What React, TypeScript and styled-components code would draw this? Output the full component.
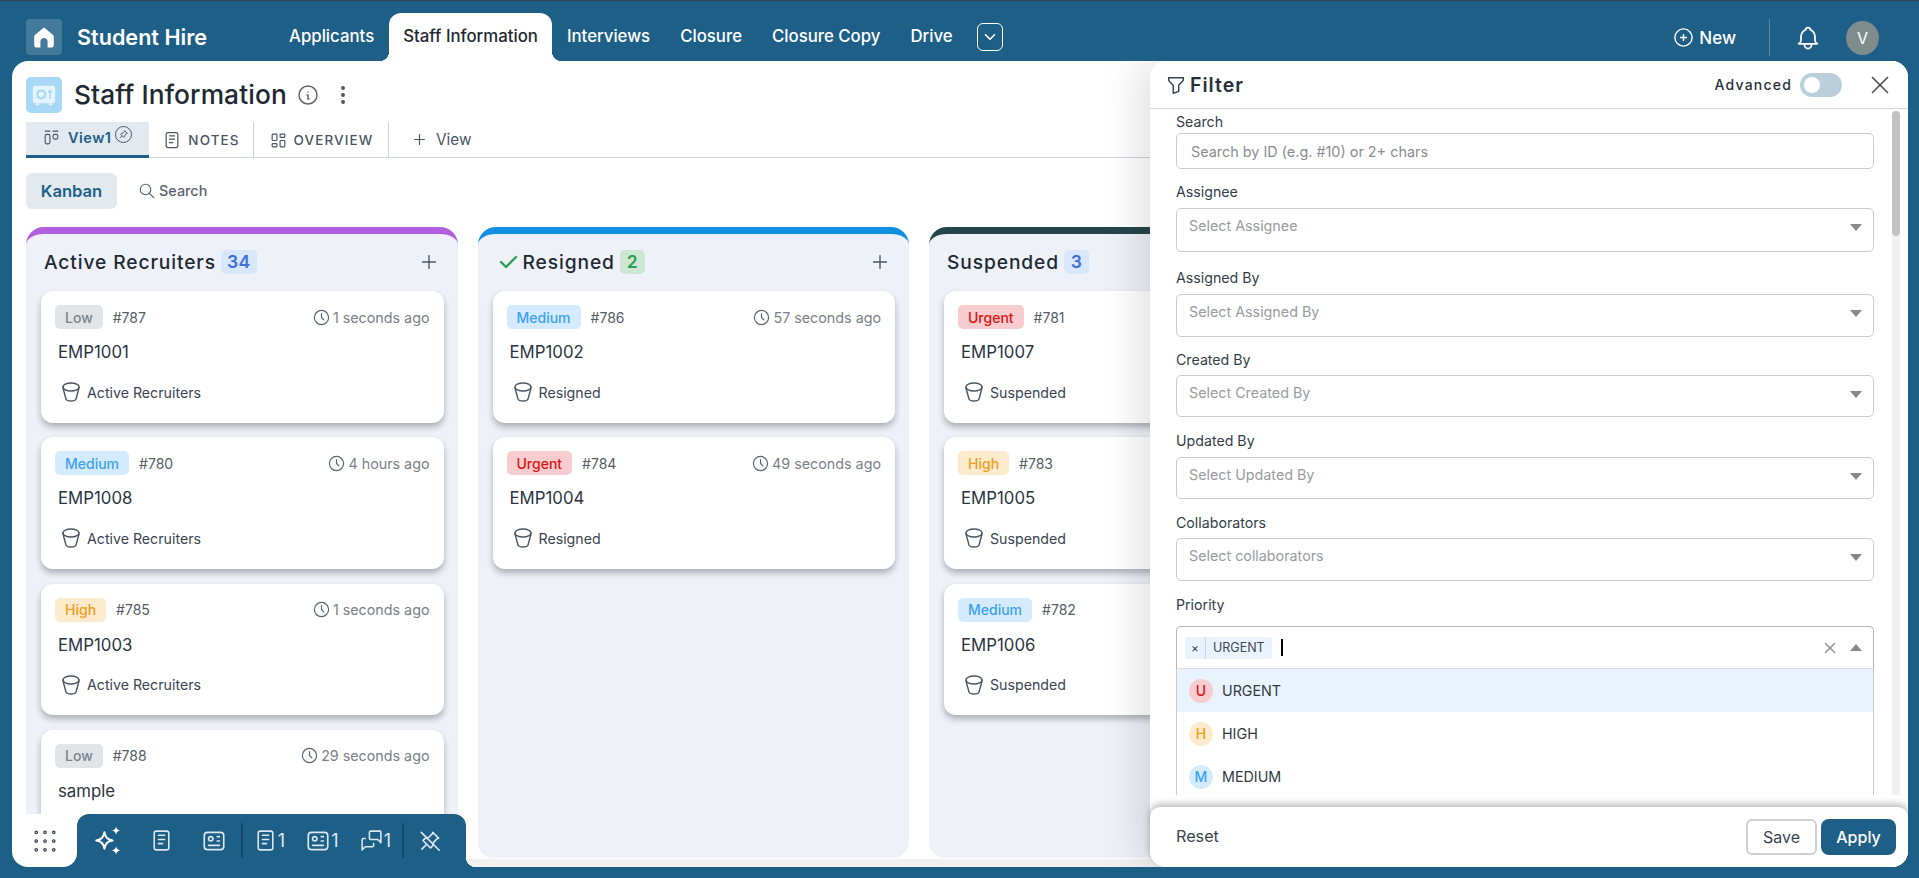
import React from "react";
import styled, { createGlobalStyle } from "styled-components";
import {
  TbBell, TbBucket, TbCheck, TbChevronDown, TbCirclePlus, TbClock, TbDotsVertical, TbFilter, TbGridDots, TbId,
  TbInfoCircle, TbLayoutDashboard, TbLayoutKanban, TbMessages, TbNotes, TbPlus, TbSearch, TbX, TbPin,
} from "react-icons/tb";

const BLUE = "#1d5f87";
const FONT = `Inter, "Noto Sans", sans-serif`;

const Global = createGlobalStyle`
  html, body { margin: 0; height: 100%; overflow: hidden; }
  body { font-family: ${FONT}; background: ${BLUE}; }
  #root { height: 100%; }
  * { box-sizing: border-box; }
`;

const Page = styled.div`
  height: 100vh; display: flex; flex-direction: column; background: ${BLUE};
  border-top: 1px solid #36444d;
`;
const TopBar = styled.header`
  height: 60px; flex: none; display: flex; align-items: flex-end; padding-left: 26px; padding-right: 40px; color: #fff;
`;
const Brand = styled.div`
  display: flex; align-items: center; gap: 15px; height: 36px; margin-bottom: 6px; margin-right: 33px; width: 215px;
`;
const HomeBox = styled.div`
  width: 36px; height: 36px; border-radius: 4px; background: rgba(255,255,255,.17); display: flex; align-items: center; justify-content: center; flex: none;
`;
const BrandName = styled.div`font-size: 21.6px; font-weight: 600; white-space: nowrap;`;
const NavTab = styled.div<{ $active?: boolean }>`
  position: relative; height: 48px; padding: 0 ${(p) => (p.$active ? "14px" : "15px")}; display: flex; align-items: center;
  font-size: 16.8px; font-weight: 500; white-space: nowrap; padding-bottom: 2px;
  color: ${(p) => (p.$active ? "#1f2933" : "#fff")};
  background: ${(p) => (p.$active ? "#fff" : "transparent")};
  border-radius: 12px 12px 0 0;
  ${(p) => p.$active && `
    &::before, &::after { content: ""; position: absolute; bottom: 0; width: 10px; height: 10px; }
    &::before { left: -10px; background: radial-gradient(circle at 0 0, transparent 10px, #fff 10.5px); }
    &::after { right: -10px; background: radial-gradient(circle at 100% 0, transparent 10px, #fff 10.5px); }
  `}
`;
const MoreButton = styled.div`
  width: 26px; height: 28px; border: 1px solid #fff; border-radius: 6px; display: flex; align-items: center; justify-content: center;
  margin: 0 0 10px 9px;
`;
const TopRight = styled.div`margin-left: auto; display: flex; align-items: center; height: 37px; margin-bottom: 5px;`;
const NewButton = styled.div`display: flex; align-items: center; gap: 4px; font-size: 17px; font-weight: 500;`;
const Divider = styled.div`width: 1px; height: 37px; background: rgba(255,255,255,.25); margin: 0 24px 0 33px;`;
const Avatar = styled.div`
  width: 33px; height: 34px; border-radius: 50%; background: #7f8c8c; margin-left: 24px; display: flex; align-items: center; justify-content: center; font-size: 16px; font-weight: 400;
`;

const MainPanel = styled.main`
  position: relative; flex: 1; min-height: 0; margin: 0 11px 11px 12px; background: #fff; border-radius: 16px; overflow: hidden;
  display: flex; flex-direction: column; padding-top: 16px;
`;
const TitleRow = styled.div`display: flex; align-items: center; height: 36px; padding-left: 14px; flex: none;`;
const SafeBox = styled.div`
  width: 36px; height: 36px; border-radius: 5px; background: #a7d9f6; display: flex; align-items: center; justify-content: center; margin-right: 12px;
`;
const PageTitle = styled.h1`margin: 0 0 1px; font-size: 26.3px; font-weight: 500; color: #1f2933; white-space: nowrap; letter-spacing: .1px;`;
const TitleIcon = styled.span<{ $gap: number }>`display: flex; margin-left: ${(p) => p.$gap}px; color: #666;`;
const ViewTabs = styled.div`
  display: flex; height: 36px; margin: 9px 0 0 14px; border-bottom: 1px solid #cfd2d6; flex: none;
`;
const ViewTab = styled.div<{ $w: number }>`
  width: ${(p) => p.$w}px; height: 36px; display: flex; align-items: center; justify-content: center; gap: 6px; color: #4b5563;
  font-size: 13.5px; font-weight: 500; letter-spacing: 1.1px; white-space: nowrap;
  border-right: 1px solid #cfd2d6;
`;
const ActiveViewTab = styled.div`
  width: 123px; height: 36px; display: flex; align-items: center; gap: 7px; padding: 0 0 3px 16px; white-space: nowrap;
  background: #e2eaf0; color: ${BLUE}; border-bottom: 3px solid ${BLUE}; font-weight: 600; letter-spacing: .5px; font-size: 14.5px;
`;
const PinCircle = styled.span`
  width: 17px; height: 17px; border: 1px solid #4b5563; border-radius: 50%; display: inline-flex; align-items: center; justify-content: center; color: #4b5563; margin-left: -4px; margin-top: -6px;
`;
const AddView = styled.div`
  display: flex; align-items: center; gap: 8px; margin-left: 22px; color: #4b5563; font-size: 15.3px; font-weight: 400;
`;
const ToolRow = styled.div`display: flex; align-items: center; height: 36px; margin: 15px 0 0 14px; flex: none;`;
const KanbanChip = styled.div`
  width: 91px; height: 36px; border-radius: 6px; background: #e2eaf0; color: ${BLUE}; font-size: 16.6px; font-weight: 600; display: flex; align-items: center; justify-content: center;
`;
const SearchLink = styled.div`
  display: flex; align-items: center; gap: 3px; margin-left: 21px; font-size: 14.4px; font-weight: 500; color: #5b6470; padding-bottom: 1px;
`;
const Board = styled.div`flex: 1; min-height: 0; display: flex; gap: 20px; padding-left: 14px; margin-top: 18px; overflow: hidden;`;
const Column = styled.section<{ $accent: string }>`
  width: 431.5px; flex: none; height: 100%; background: #eef1f7; border-top: 7px solid ${(p) => p.$accent}; border-radius: 18px 18px 16px 16px; overflow: hidden;
  padding: 0 14px 0 15px;
`;
const ColumnHead = styled.div`display: flex; align-items: center; height: 57px; padding: 0 4px 2px 0; color: #4b5563;`;
const CheckMark = styled(TbCheck)`margin-left: 3px; flex: none;`;
const ColumnName = styled.div`
  font-size: 19.2px; font-weight: 500; color: #1f2933; letter-spacing: .9px; white-space: nowrap; margin-left: 3px;
`;
const Count = styled.span<{ $green?: boolean }>`
  margin-left: 5px; height: 24px; min-width: 25px; padding: 0 6px; border-radius: 5px; display: flex; align-items: center; justify-content: center;
  font-size: 17.5px; font-weight: 600; letter-spacing: .5px;
  background: ${(p) => (p.$green ? "#cde7d2" : "#d9e7fc")}; color: ${(p) => (p.$green ? "#2f9e57" : "#3f6fd8")};
`;
const AddCard = styled.span`margin-left: auto; display: flex;`;
const CardEl = styled.article`
  height: 131.8px; margin-bottom: 14.5px; background: #fff; border-radius: 12px; padding: 14px 14px 0;
  box-shadow: 0 4px 6px rgba(30,40,50,.32);
`;
const CardTop = styled.div`display: flex; align-items: center; height: 24px;`;
const tones = {
  Low: ["#e2e4e8", "#7a828c"],
  Medium: ["#d3ebfd", "#3da1ee"],
  High: ["#fbeacb", "#ef9d1a"],
  Urgent: ["#f7ccce", "#dc1414"],
} as const;
const Tag = styled.span<{ $tone: keyof typeof tones }>`
  height: 24px; padding: 0 10px; border-radius: 5px; display: flex; align-items: center; font-size: 14px; font-weight: 500;
  background: ${(p) => tones[p.$tone][0]}; color: ${(p) => tones[p.$tone][1]};
`;
const CardId = styled.span`margin-left: 10px; font-size: 14px; color: #555c66;`;
const CardTime = styled.span`margin-left: auto; display: flex; align-items: center; gap: 2px; font-size: 14.3px; color: #7a8088; white-space: nowrap;`;
const CardName = styled.div`margin: 13px 0 0 3px; font-size: 16.8px; line-height: 20px; color: #2a3442;`;
const CardStatus = styled.div`display: flex; align-items: center; gap: 4px; height: 24px; margin: 18px 0 0 4px; font-size: 14.2px; color: #3a4452;`;
const ScrollStrip = styled.div`height: 8px; margin-top: 1px; background: #f1f1f1; flex: none;`;

const Dock = styled.div`
  position: absolute; left: 0; bottom: 0; height: 53px; display: flex; background: linear-gradient(to bottom, #fff 50%, ${BLUE} 50%);
`;
const DockHome = styled.div`
  width: 65px; height: 53px; background: #fff; border-radius: 0 0 14px 14px; display: flex; align-items: center; justify-content: center; color: #3c4654;
`;
const DockBar = styled.div`
  position: relative; width: 389px; background: ${BLUE}; border-radius: 12px 12px 0 0; display: flex; align-items: center; padding-left: 4.5px; color: #dce8ef;
  &::after { content: ""; position: absolute; right: -10px; bottom: 0; width: 10px; height: 10px; background: radial-gradient(circle at 100% 0, transparent 10px, ${BLUE} 10.5px); }
`;
const DockItem = styled.div`
  width: 53px; height: 53px; display: flex; align-items: center; justify-content: center; gap: 0; font-size: 18px; font-weight: 400; flex: none;
`;
const DockRule = styled.div`width: 2px; height: 35px; background: #164a6a; flex: none;`;

const Filter = styled.aside`
  position: absolute; top: 0; right: 0; bottom: 0; width: 758px; background: #fff; border-radius: 16px 0 0 16px;
  box-shadow: -10px 0 40px rgba(0,0,0,.13); display: flex; flex-direction: column;
`;
const FilterHead = styled.div`
  height: 48px; flex: none; border-bottom: 1px solid #d5d7da; display: flex; align-items: center; padding: 0 13px 0 15px;
`;
const FilterName = styled.div`margin-left: 3px; font-size: 19.5px; font-weight: 600; color: #27303a; letter-spacing: 1px;`;
const AdvLabel = styled.div`margin-left: auto; font-size: 14px; font-weight: 500; color: #27303a; letter-spacing: 1.2px;`;
const Toggle = styled.div`
  width: 42px; height: 24px; margin: 0 23px 0 8px; border-radius: 12px; background: #b9cfdc; display: flex; align-items: center; padding-left: 4px;
  &::before { content: ""; width: 16px; height: 16px; border-radius: 50%; background: #fff; }
`;
const FilterBody = styled.div`height: 686px; flex: none; display: flex; overflow: hidden;`;
const FormCol = styled.div`width: 742px; padding: 4px 18px 0 26px; flex: none;`;
const ScrollTrack = styled.div`width: 8px; margin-top: 2px; background: #f1f1f1; flex: none; border-radius: 4px 4px 0 0;`;
const ScrollThumb = styled.div`height: 125px; background: #c1c1c1; border-radius: 4px;`;
const Label = styled.div<{ $top?: number }>`
  font-size: 14.2px; line-height: 18px; color: #333d4a; margin-top: ${(p) => p.$top ?? 0}px;
`;
const SearchInput = styled.div`
  height: 36px; margin-top: 2px; border: 1px solid #c9cbce; border-radius: 5px; display: flex; align-items: center; padding-left: 14px; font-size: 14.4px; color: #8a8d92;
`;
const SelectBox = styled.div<{ $h: number; $top: number }>`
  height: ${(p) => p.$h}px; margin-top: ${(p) => p.$top}px; border: 1px solid #c9cbce; border-radius: 5px; display: flex; justify-content: space-between;
  padding: 7px 11px 0 12px; font-size: 14.3px; line-height: 20px; color: #999c9f;
`;
const Caret = styled.span<{ $up?: boolean }>`
  width: 0; height: 0; border-left: 6.5px solid transparent; border-right: 6.5px solid transparent; margin-top: ${(p) => (p.$up ? 0 : 8)}px;
  ${(p) => (p.$up ? "border-bottom: 7px solid #888;" : "border-top: 7px solid #888;")}
`;
const PriorityBox = styled.div`
  height: 43px; margin-top: 12px; border: 1px solid #b3b5b8; border-bottom-color: #dcdde0; border-radius: 5px 5px 0 0; display: flex; align-items: center; padding: 0 11px 0 8px;
`;
const Chip = styled.div`
  height: 22px; background: #e9f3fd; border-radius: 3px; display: flex; align-items: center; font-size: 12.5px; color: #3f4852;
`;
const ChipX = styled.span`
  width: 21px; height: 22px; display: flex; align-items: center; justify-content: center; border-right: 1px solid #bcdcf8; font-size: 12px;
`;
const ChipText = styled.span`padding: 0 7px 0 7px;`;
const Cursor = styled.span`width: 2px; height: 17px; margin-left: 9px; background: #000;`;
const ClearIcon = styled.span`margin-left: auto; margin-right: 11px; display: flex; color: #888;`;
const Menu = styled.div`border-left: 1px solid #c9cbce; border-right: 1px solid #c9cbce;`;
const Option = styled.div<{ $hover?: boolean }>`
  height: 43px; display: flex; align-items: center; padding-left: 12px; gap: 9px; font-size: 14.3px; color: #333a42;
  background: ${(p) => (p.$hover ? "#e9f3fd" : "#fff")};
`;
const OptionDot = styled.span<{ $tone: keyof typeof tones }>`
  width: 24px; height: 24px; border-radius: 50%; display: flex; align-items: center; justify-content: center; font-size: 14px; font-weight: 500;
  background: ${(p) => tones[p.$tone][0]}; color: ${(p) => tones[p.$tone][1]};
`;
const FilterFoot = styled.div`
  height: 60px; margin-top: 12px; flex: none; display: flex; align-items: center; padding: 0 12px 0 26px; background: #fff; border-radius: 10px 10px 0 16px;
  box-shadow: 0 -3px 7px rgba(0,0,0,.28);
`;
const ResetLink = styled.div`font-size: 16.2px; color: #3a4452; padding-bottom: 2px;`;
const SaveButton = styled.div`
  margin-left: auto; width: 71px; height: 36px; border: 2px solid #cdd0d4; border-radius: 6px; display: flex; align-items: center; justify-content: center; font-size: 16px; color: #3a4452;
`;
const ApplyButton = styled.div`
  margin-left: 4px; width: 75px; height: 36px; border-radius: 8px; background: ${BLUE}; color: #fff; display: flex; align-items: center; justify-content: center; font-size: 16px; font-weight: 500;
`;

type CardData = { tone: keyof typeof tones; id: string; time?: string; name: string };
const columns: { name: string; accent: string; count: string; check?: boolean; green?: boolean; cards: CardData[] }[] = [
  { name: "Active Recruiters", accent: "#b25fdf", count: "34", cards: [
    { tone: "Low", id: "#787", time: "1 seconds ago", name: "EMP1001" },
    { tone: "Medium", id: "#780", time: "4 hours ago", name: "EMP1008" },
    { tone: "High", id: "#785", time: "1 seconds ago", name: "EMP1003" },
    { tone: "Low", id: "#788", time: "29 seconds ago", name: "sample" },
  ] },
  { name: "Resigned", accent: "#1190e2", count: "2", check: true, green: true, cards: [
    { tone: "Medium", id: "#786", time: "57 seconds ago", name: "EMP1002" },
    { tone: "Urgent", id: "#784", time: "49 seconds ago", name: "EMP1004" },
  ] },
  { name: "Suspended", accent: "#24464a", count: "3", cards: [
    { tone: "Urgent", id: "#781", name: "EMP1007" },
    { tone: "High", id: "#783", name: "EMP1005" },
    { tone: "Medium", id: "#782", name: "EMP1006" },
  ] },
];
const selects = [
  { label: "Assignee", text: "Select Assignee", gap: 14, top: 7, h: 44 },
  { label: "Assigned By", text: "Select Assigned By", gap: 17, top: 7, h: 43 },
  { label: "Created By", text: "Select Created By", gap: 14, top: 6, h: 42 },
  { label: "Updated By", text: "Select Updated By", gap: 15, top: 7, h: 42 },
  { label: "Collaborators", text: "Select collaborators", gap: 15, top: 6, h: 43 },
];

const HomeGlyph = () => (
  <svg width="20" height="21" viewBox="0 0 20 21" fill="#fff">
    <path d="M10 0.5 L18.6 7.4 C19.4 8 19.8 8.8 19.8 9.8 V18 C19.8 19.6 18.7 20.6 17.2 20.6 H13.6 V14.5 C13.6 12.4 12 11 10 11 C8 11 6.4 12.4 6.4 14.5 V20.6 H2.8 C1.3 20.6 0.2 19.6 0.2 18 V9.8 C0.2 8.8 0.6 8 1.4 7.4 Z" />
  </svg>
);
const SafeGlyph = () => (
  <svg width="26" height="26" viewBox="0 0 28 28" fill="none">
    <rect x="2" y="4" width="24" height="19" rx="3" fill="#e6f4fd" />
    <rect x="5" y="23" width="4" height="2" fill="#e6f4fd" />
    <rect x="19" y="23" width="4" height="2" fill="#e6f4fd" />
    <circle cx="11" cy="13.5" r="4.2" stroke="#a7d9f6" strokeWidth="2.4" />
    <path d="M20.5 18 V10 M18.5 11.5 L20.5 9 L22.5 11.5" stroke="#a7d9f6" strokeWidth="1.6" />
  </svg>
);
const SparkGlyph = () => (
  <svg width="35" height="35" viewBox="0 0 30 30" fill="none">
    <path d="M11.5 8 C12.3 12.5 14 14.3 18.5 15 C14 15.8 12.3 17.5 11.5 22 C10.7 17.5 9 15.8 4.5 15 C9 14.3 10.7 12.5 11.5 8 Z" stroke="#fff" strokeWidth="1.8" strokeLinejoin="round" />
    <path d="M21.5 3 C22 5.2 22.8 6 25 6.5 C22.8 7 22 7.8 21.5 10 C21 7.8 20.2 7 18 6.5 C20.2 6 21 5.2 21.5 3 Z" fill="#fff" />
    <path d="M21.5 20 C22 22.2 22.8 23 25 23.5 C22.8 24 22 24.8 21.5 27 C21 24.8 20.2 24 18 23.5 C20.2 23 21 22.2 21.5 20 Z" fill="#fff" />
  </svg>
);
const PinOffGlyph = () => (
  <svg width="26" height="26" viewBox="0 0 24 24" fill="none" stroke="currentColor" strokeWidth="1.5" strokeLinecap="round" strokeLinejoin="round">
    <path d="M15 4.5l-4 4l-4 1.5l-1.5 1.5l7 7l1.5 -1.5l1.5 -4l4 -4" />
    <path d="M9 15l-4.5 4.5" />
    <path d="M14.5 4l5.5 5.5" />
    <path d="M4 4l16.5 16.5" />
  </svg>
);

const Card = ({ c, status }: { c: CardData; status: string }) => (
  <CardEl>
    <CardTop>
      <Tag $tone={c.tone}>{c.tone}</Tag>
      <CardId>{c.id}</CardId>
      {c.time && (
        <CardTime>
          <TbClock size={19} strokeWidth={1.5} color="#5b6470" />
          {c.time}
        </CardTime>
      )}
    </CardTop>
    <CardName>{c.name}</CardName>
    <CardStatus>
      <TbBucket size={24} strokeWidth={1.4} color="#4b5563" />
      {status}
    </CardStatus>
  </CardEl>
);

export default function App() {
  return (
    <Page>
      <Global />
      <TopBar>
        <Brand>
          <HomeBox><HomeGlyph /></HomeBox>
          <BrandName>Student Hire</BrandName>
        </Brand>
        <NavTab>Applicants</NavTab>
        <NavTab $active>Staff Information</NavTab>
        <NavTab>Interviews</NavTab>
        <NavTab>Closure</NavTab>
        <NavTab>Closure Copy</NavTab>
        <NavTab>Drive</NavTab>
        <MoreButton><TbChevronDown size={18} strokeWidth={2.2} /></MoreButton>
        <TopRight>
          <NewButton><TbCirclePlus size={23} strokeWidth={1.5} />New</NewButton>
          <Divider />
          <TbBell size={28} strokeWidth={1.5} />
          <Avatar>V</Avatar>
        </TopRight>
      </TopBar>
      <MainPanel>
        <TitleRow>
          <SafeBox><SafeGlyph /></SafeBox>
          <PageTitle>Staff Information</PageTitle>
          <TitleIcon $gap={9}><TbInfoCircle size={24} strokeWidth={1.5} /></TitleIcon>
          <TitleIcon $gap={11}><TbDotsVertical size={24} strokeWidth={2} color="#4b5563" /></TitleIcon>
        </TitleRow>
        <ViewTabs>
          <ActiveViewTab>
            <TbLayoutKanban size={19} strokeWidth={1.4} color="#4b5563" />
            View1
            <PinCircle><TbPin size={11} /></PinCircle>
          </ActiveViewTab>
          <ViewTab $w={105}><TbNotes size={20} strokeWidth={1.5} />NOTES</ViewTab>
          <ViewTab $w={135}><TbLayoutDashboard size={19} strokeWidth={1.5} />OVERVIEW</ViewTab>
          <AddView><TbPlus size={17} strokeWidth={1.6} />View</AddView>
        </ViewTabs>
        <ToolRow>
          <KanbanChip>Kanban</KanbanChip>
          <SearchLink><TbSearch size={18} strokeWidth={1.5} />Search</SearchLink>
        </ToolRow>
        <Board>
          {columns.map((col) => (
            <Column key={col.name} $accent={col.accent}>
              <ColumnHead>
                {col.check && <CheckMark size={24} strokeWidth={2.4} color="#2f9e57" />}
                <ColumnName>{col.name}</ColumnName>
                <Count $green={col.green}>{col.count}</Count>
                <AddCard><TbPlus size={22} strokeWidth={1.5} /></AddCard>
              </ColumnHead>
              {col.cards.map((c) => <Card key={c.id} c={c} status={col.name} />)}
            </Column>
          ))}
        </Board>
        <ScrollStrip />
        <Dock>
          <DockHome><TbGridDots size={30} strokeWidth={1} /></DockHome>
          <DockBar>
            <DockItem><SparkGlyph /></DockItem>
            <DockItem><TbNotes size={25} strokeWidth={1.5} /></DockItem>
            <DockItem><TbId size={26} strokeWidth={1.5} /></DockItem>
            <DockRule />
            <DockItem><TbNotes size={25} strokeWidth={1.5} />1</DockItem>
            <DockItem><TbId size={26} strokeWidth={1.5} />1</DockItem>
            <DockItem><TbMessages size={25} strokeWidth={1.5} />1</DockItem>
            <DockRule />
            <DockItem><PinOffGlyph /></DockItem>
          </DockBar>
        </Dock>
        <Filter>
          <FilterHead>
            <TbFilter size={22} strokeWidth={1.6} color="#3a4452" />
            <FilterName>Filter</FilterName>
            <AdvLabel>Advanced</AdvLabel>
            <Toggle />
            <TbX size={30} strokeWidth={1.4} color="#555" />
          </FilterHead>
          <FilterBody>
            <FormCol>
              <Label>Search</Label>
              <SearchInput>Search by ID (e.g. #10) or 2+ chars</SearchInput>
              {selects.map((s) => (
                <React.Fragment key={s.label}>
                  <Label $top={s.gap}>{s.label}</Label>
                  <SelectBox $h={s.h} $top={s.top}>{s.text}<Caret /></SelectBox>
                </React.Fragment>
              ))}
              <Label $top={15}>Priority</Label>
              <PriorityBox>
                <Chip><ChipX>×</ChipX><ChipText>URGENT</ChipText></Chip>
                <Cursor />
                <ClearIcon><TbX size={18} strokeWidth={1.8} /></ClearIcon>
                <Caret $up />
              </PriorityBox>
              <Menu>
                <Option $hover><OptionDot $tone="Urgent">U</OptionDot>URGENT</Option>
                <Option><OptionDot $tone="High">H</OptionDot>HIGH</Option>
                <Option><OptionDot $tone="Medium">M</OptionDot>MEDIUM</Option>
              </Menu>
            </FormCol>
            <ScrollTrack><ScrollThumb /></ScrollTrack>
          </FilterBody>
          <FilterFoot>
            <ResetLink>Reset</ResetLink>
            <SaveButton>Save</SaveButton>
            <ApplyButton>Apply</ApplyButton>
          </FilterFoot>
        </Filter>
      </MainPanel>
    </Page>
  );
}
